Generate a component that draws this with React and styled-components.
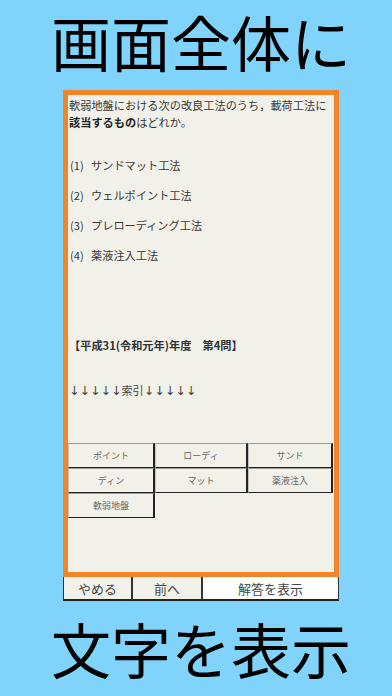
import React from 'react';
import styled, { createGlobalStyle } from 'styled-components';

const GlobalStyle = createGlobalStyle`
  html, body {
    margin: 0;
    padding: 0;
    background: #80d4fc;
  }
  body {
    font-family: "Noto Sans CJK JP", "Noto Sans", sans-serif;
  }
`;

const Page = styled.div`
  width: 392px;
  min-height: 696px;
  padding-left: 10px;
  box-sizing: border-box;
  background: #80d4fc;
  display: flex;
  flex-direction: column;
  align-items: center;
`;

const Caption = styled.h1`
  margin: 0;
  padding: ${(p) => p.$pt}px 0 ${(p) => p.$pb}px;
  text-align: center;
  font-size: 60px;
  font-weight: 400;
  line-height: 72px;
  color: #000;
`;

const Frame = styled.div`
  width: 276px;
  height: 487px;
  box-sizing: border-box;
  border: 5px solid #f58426;
  background: #f1f1ea;
  display: flex;
  flex-direction: column;
`;

const TextArea = styled.div`
  height: 348px;
  padding: 2px 0 0 1px;
  box-sizing: border-box;
  color: #383838;
  font-size: 11.2px;
  line-height: 17px;
`;

const Question = styled.p`
  margin: 0;
  b {
    font-weight: 700;
    color: #222;
  }
`;

const Options = styled.div`
  margin-top: 19px;
`;

const Option = styled.div`
  height: 30px;
  display: flex;
  align-items: center;
  padding-left: 1px;
`;

const Num = styled.span`
  width: 21px;
`;

const Heading = styled.div`
  margin-top: 67px;
  font-weight: 700;
  color: #333;
`;

const Index = styled.div`
  margin-top: 28px;
  color: #444;
  .arrow {
    font-family: "DejaVu Sans", sans-serif;
    font-size: 12.5px;
    color: #444;
  }
`;

const Keys = styled.div`
  display: grid;
  grid-template-columns: 87px 93px 85px;
  grid-auto-rows: 25px;
`;

const Key = styled.div`
  box-sizing: border-box;
  display: flex;
  align-items: center;
  justify-content: center;
  font-size: 9px;
  color: #666;
  border-top: 1px solid #9a9a96;
  border-left: 1px solid #c4c4be;
  border-right: 2px solid #222;
  border-bottom: 1px solid #222;
`;

const Bar = styled.div`
  width: 276px;
  height: 24px;
  display: grid;
  grid-template-columns: 69px 70px 137px;
`;

const BarButton = styled.div`
  box-sizing: border-box;
  display: flex;
  align-items: center;
  justify-content: center;
  font-size: 13px;
  color: #444;
  background: ${(p) => (p.$primary ? '#fff' : '#f1f1ea')};
  border-left: 1px solid #333;
  border-right: 1px solid #333;
  border-bottom: 2px solid #222;
`;

const options = [
  ['(1)', 'サンドマット工法'],
  ['(2)', 'ウェルポイント工法'],
  ['(3)', 'プレローディング工法'],
  ['(4)', '薬液注入工法'],
];

const keys = ['ポイント', 'ローディ', 'サンド', 'ディン', 'マット', '薬液注入', '軟弱地盤'];

export default function App() {
  return (
    <Page>
      <GlobalStyle />
      <Caption $pt={5} $pb={13}>画面全体に</Caption>
      <Frame>
        <TextArea>
          <Question>
            軟弱地盤における次の改良工法のうち，載荷工法に
            <br />
            <b>該当するもの</b>はどれか。
          </Question>
          <Options>
            {options.map(([n, t]) => (
              <Option key={n}>
                <Num>{n}</Num>
                {t}
              </Option>
            ))}
          </Options>
          <Heading>【平成31(令和元年)年度　第4問】</Heading>
          <Index>
            <span className="arrow">↓↓↓↓↓</span>索引<span className="arrow">↓↓↓↓↓</span>
          </Index>
        </TextArea>
        <Keys>
          {keys.map((k) => (
            <Key key={k}>{k}</Key>
          ))}
        </Keys>
      </Frame>
      <Bar>
        <BarButton>やめる</BarButton>
        <BarButton>前へ</BarButton>
        <BarButton $primary>解答を表示</BarButton>
      </Bar>
      <Caption $pt={11} $pb={12}>文字を表示</Caption>
    </Page>
  );
}
